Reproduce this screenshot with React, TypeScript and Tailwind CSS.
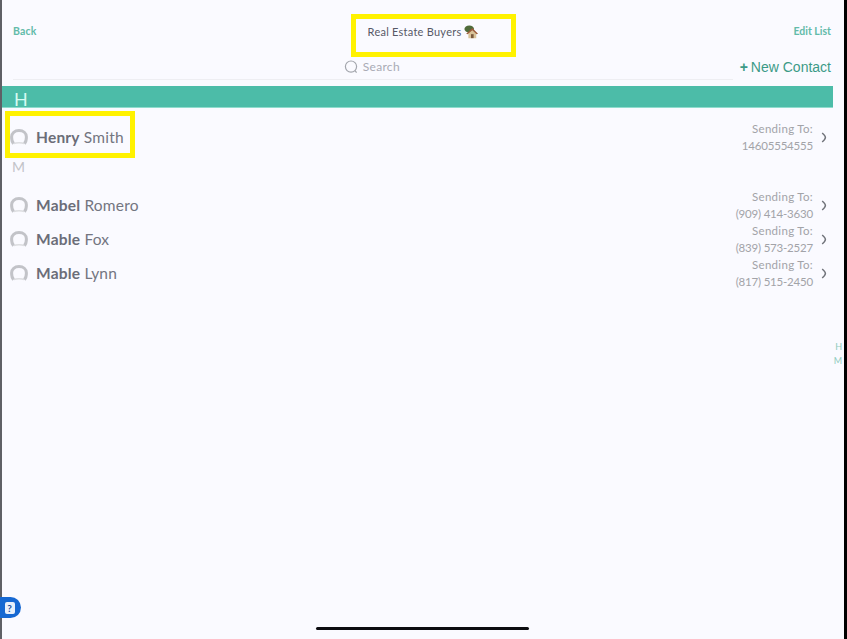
import React from 'react';

type Contact = {
  first: string;
  last: string;
  phone: string;
};

const mContacts: Contact[] = [
  { first: 'Mabel', last: 'Romero', phone: '(909) 414-3630' },
  { first: 'Mable', last: 'Fox', phone: '(839) 573-2527' },
  { first: 'Mable', last: 'Lynn', phone: '(817) 515-2450' },
];

function HouseEmoji() {
  return (
    <svg viewBox="0 0 16 16" className="w-[14px] h-[14px] ml-[3px]">
      <ellipse cx="6" cy="4.5" rx="5.5" ry="4" fill="#4f6b3a" />
      <path d="M3 10 L9.5 4.5 L15.5 10 L14 10 L14 15 L5 15 L5 10 Z" fill="#d9c39a" />
      <path d="M2.5 10 L9.5 3.5 L16 10 L14.5 10.5 L9.5 6 L4 10.5 Z" fill="#9a5a3c" />
      <rect x="8" y="10.5" width="3" height="4.5" fill="#7b5a3e" />
    </svg>
  );
}

function Avatar() {
  return (
    <svg viewBox="0 0 18 16" className="w-[18px] h-[16px] shrink-0" fill="none">
      <path d="M4 14.5 C6 13.6 12 13.6 14 14.5" stroke="#dcdde0" strokeWidth="1.5" />
      <path
        d="M3.6 14.6 C2 13 1.6 10.5 1.6 8 C1.6 4 4.6 1.6 9 1.6 C13.4 1.6 16.4 4 16.4 8 C16.4 10.5 16 13 14.4 14.6"
        stroke="#c2c3c8"
        strokeWidth="3"
      />
    </svg>
  );
}

function Row({ contact, className }: { contact: Contact; className?: string }) {
  return (
    <div className={`flex items-center h-[34px] pl-[10px] pr-[20px] ${className ?? ''}`}>
      <Avatar />
      <div className="ml-[8px] mt-[2px] text-[15.5px] tracking-[0.2px] text-[#73757f]">
        <span className="font-bold text-[#6b6d78]">{contact.first}</span> {contact.last}
      </div>
      <div className="ml-auto text-right text-[11.5px] leading-[17px] text-[#a2a3a8]">
        <div className="tracking-[0.3px]">Sending To:</div>
        <div className="tracking-[-0.2px]">{contact.phone}</div>
      </div>
      <svg viewBox="0 0 6 11" className="w-[6px] h-[11px] ml-[8px]" fill="none" stroke="#70737a" strokeWidth="1.5">
        <path d="M1.2 1 C3.5 3 4.4 4.5 4.4 5.5 C4.4 6.5 3.5 8 1.2 10" />
      </svg>
    </div>
  );
}

export default function App() {
  return (
    <div className="relative w-[847px] h-[639px] overflow-hidden bg-[#fafaff] font-['Lato',sans-serif]">
      <div className="absolute left-0 top-0 bottom-0 w-[2px] bg-[#5f6066]" />
      <div className="absolute right-0 top-0 bottom-0 w-[3px] bg-black" />

      {/* top bar */}
      <div className="flex items-start justify-between h-[57px] pt-[25px] pl-[13px] pr-[16px]">
        <button className="text-[10.5px] leading-[12px] font-bold tracking-[0.2px] text-[#62bba9]">Back</button>
        <div className="flex items-center text-[11px] leading-[14px] tracking-[0.25px] text-[#565866] ml-[16px]">
          Real Estate Buyers
          <HouseEmoji />
        </div>
        <button className="text-[10.5px] leading-[12px] font-bold text-[#62bba9]">Edit List</button>
      </div>

      {/* search */}
      <div className="flex items-end h-[23px] pr-[16px]">
        <div className="flex-1 h-[23px] ml-[13px] border-b border-[#eeeef2]">
          <div className="flex items-center justify-center h-[19px] gap-[5px] ml-[-2px] text-[12px] tracking-[0.3px] text-[#a9abb5]">
            <svg viewBox="0 0 14 14" className="w-[14px] h-[14px]" fill="none" stroke="#a3a6ad" strokeWidth="1.2">
              <circle cx="7" cy="6.6" r="5.6" />
              <path d="M11 10.6 L12.6 12.6" />
            </svg>
            Search
          </div>
        </div>
        <div className="flex items-center h-[24px] mb-[1px] ml-[7px] font-['Liberation_Sans',sans-serif] text-[14px] text-[#3c9a87]">
          <span className="font-bold mr-[3px]">+</span>New Contact
        </div>
      </div>

      {/* section H */}
      <div className="mt-[6px] h-[22px] mr-[14px] bg-[#4cbca8] border-b border-[#8fdccd] pl-[14px] text-[18px] leading-[27px] text-[#d6fbf2]">
        H
      </div>

      <Row
        contact={{ first: 'Henry', last: 'Smith', phone: '14605554555' }}
        className="mt-[12px]"
      />

      <div className="pl-[12px] mt-[3px] h-[24px] text-[14px] leading-[20px] text-[#c2c3c8]">M</div>

      <div className="mt-[7px]">
        {mContacts.map((c) => (
          <Row key={c.first + c.last} contact={c} />
        ))}
      </div>

      {/* alphabet index */}
      <div className="absolute right-[5px] top-[340px] text-[9px] leading-[14px] text-right text-[#8fcbbd]">
        <div>H</div>
        <div>M</div>
      </div>

      {/* help bubble */}
      <div className="absolute left-0 top-[597px] w-[21px] h-[21px] rounded-r-full bg-[#1668d2] flex items-center justify-center">
        <div className="w-[10px] h-[12px] ml-[-2px] rounded-[2px] bg-[#e8f0fb] text-[10px] leading-[12px] font-bold text-center text-[#1d4f9c]">?</div>
      </div>

      {/* home indicator */}
      <div className="absolute left-[316px] top-[627px] w-[213px] h-[3px] rounded-full bg-[#0c0c10]" />

      {/* yellow highlights */}
      <div className="absolute left-[351px] top-[14px] w-[165px] h-[43px] border-[5px] border-[#fff200]" />
      <div className="absolute left-[5px] top-[111px] w-[130px] h-[47px] border-[5px] border-[#fff200]" />
    </div>
  );
}
